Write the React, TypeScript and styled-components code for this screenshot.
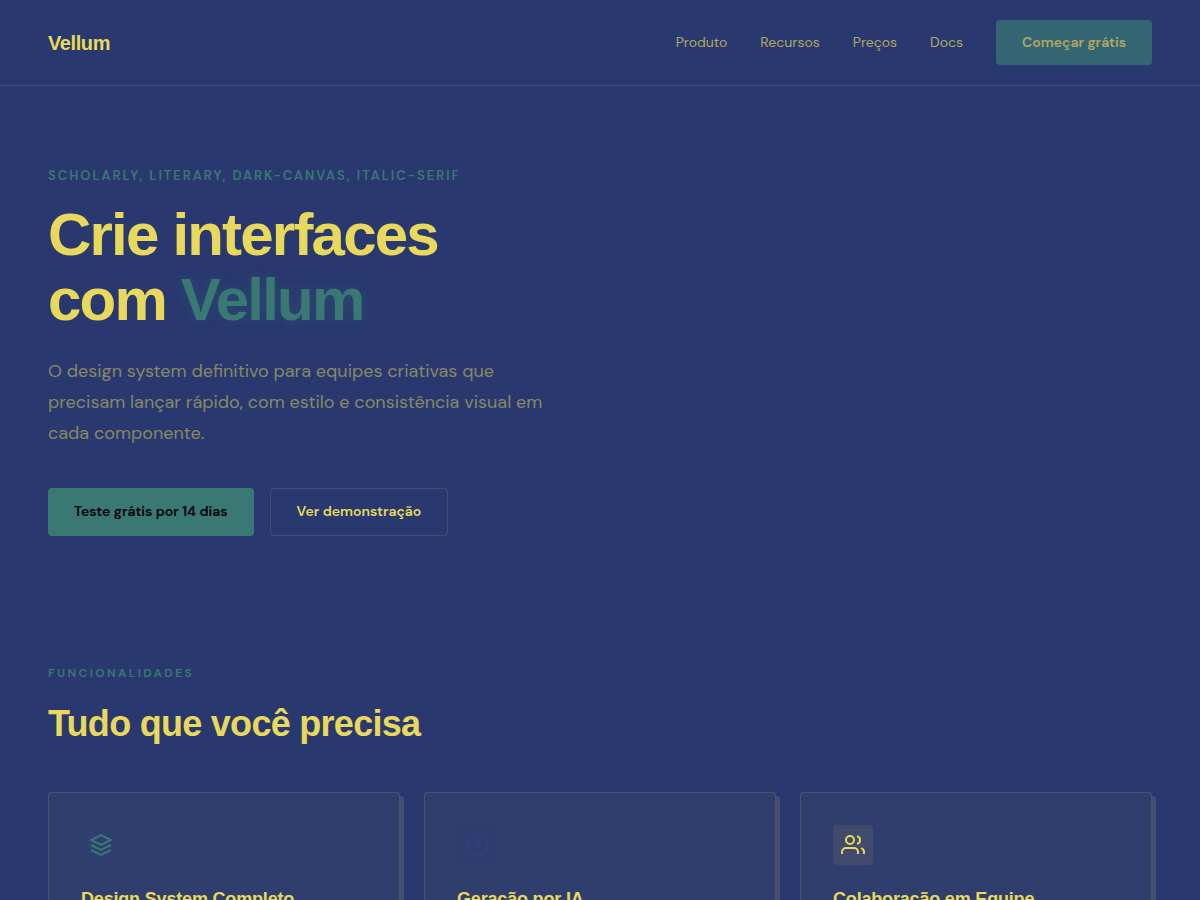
import React from "react";
import styled, { createGlobalStyle } from "styled-components";

const sans = `"DM Sans", "Open Sans", sans-serif`;
const display = `"Liberation Sans", Arial, sans-serif`;
const yellow = "#e8d85c";
const teal = "#3a7874";
const line = "rgba(232, 216, 92, 0.15)";

const GlobalStyle = createGlobalStyle`
  *, *::before, *::after { box-sizing: border-box; }
  html, body { margin: 0; padding: 0; }
  body {
    background: #29386f;
    color: ${yellow};
    font-family: ${sans};
    line-height: 1.6;
  }
`;

const Header = styled.header`
  display: flex;
  align-items: center;
  justify-content: space-between;
  padding: 20px 48px;
  border-bottom: 1px solid ${line};
`;

const Logo = styled.a`
  color: ${yellow};
  font: 700 20px/32px ${display};
  letter-spacing: -0.02em;
  text-decoration: none;
`;

const Nav = styled.nav`
  display: flex;
  align-items: center;
  gap: 33px;
`;

const NavLink = styled.a`
  color: ${yellow};
  opacity: 0.7;
  font-size: 14px;
  line-height: 25px;
  text-decoration: none;
`;

const NavButton = styled(NavLink)`
  padding: 10px 26px;
  border-radius: 4px;
  background: ${teal};
  font-weight: 600;
`;

const Hero = styled.section`
  padding: 80px 48px;
`;

const Eyebrow = styled.p<{ $small?: boolean }>`
  margin: 0 0 ${(p) => (p.$small ? 12 : 16)}px;
  color: ${teal};
  font-size: ${(p) => (p.$small ? 12 : 13)}px;
  font-weight: 600;
  line-height: ${(p) => (p.$small ? 18 : 20)}px;
  letter-spacing: ${(p) => (p.$small ? 0.2 : 0.15)}em;
  text-transform: uppercase;
`;

const HeroTitle = styled.h1`
  max-width: 640px;
  margin: 0 0 24px;
  font: 700 60px/65px ${display};
  letter-spacing: -0.03em;
`;

const Accent = styled.span`
  color: ${teal};
  text-shadow: 0 0 12px rgba(58, 120, 116, 0.3);
`;

const Lead = styled.p`
  max-width: 520px;
  margin: 0 0 39px;
  color: rgba(232, 216, 92, 0.5);
  font-size: 18px;
  line-height: 31px;
`;

const Actions = styled.div`
  display: flex;
  flex-wrap: wrap;
  gap: 16px;
`;

const Button = styled.button<{ $outline?: boolean }>`
  height: 48px;
  padding: 0 26px 2px;
  border: ${(p) => (p.$outline ? `1px solid ${line}` : "0")};
  border-radius: 4px;
  background: ${(p) => (p.$outline ? "transparent" : teal)};
  color: ${(p) => (p.$outline ? yellow : "#000")};
  font: 600 14px/25px ${sans};
  cursor: pointer;
`;

const Features = styled.section`
  padding: 48px 48px 80px;
`;

const SectionTitle = styled.h2`
  margin: 0 0 38px;
  font: 700 36px/60px ${display};
  letter-spacing: -0.02em;
`;

const Grid = styled.div`
  display: grid;
  grid-template-columns: repeat(3, 1fr);
  gap: 24px;
`;

const Card = styled.article`
  padding: 32px;
  border: 1px solid ${line};
  border-radius: 4px;
  background: #303e6e;
  box-shadow: 4px 4px 0 #454e6c;
`;

const IconBox = styled.div<{ $color: string; $tint: string }>`
  display: grid;
  place-items: center;
  width: 40px;
  height: 40px;
  margin-bottom: 20px;
  border-radius: 4px;
  background: ${(p) => p.$tint};
  color: ${(p) => p.$color};
`;

const CardTitle = styled.h3`
  margin: 0 0 8px;
  font: 700 18px/28px ${display};
  letter-spacing: -0.01em;
`;

const CardText = styled.p`
  margin: 0;
  opacity: 0.5;
  font-size: 14px;
  line-height: 25px;
`;

const Icon = ({ children }: { children: React.ReactNode }) => (
  <svg
    width="24"
    height="24"
    viewBox="0 0 24 24"
    fill="none"
    stroke="currentColor"
    strokeWidth="2"
    aria-hidden="true"
  >
    {children}
  </svg>
);

const features = [
  {
    title: "Design System Completo",
    text: "Tokens, componentes e padrões prontos para usar.",
    color: teal,
    tint: "#2f3f70",
    icon: (
      <>
        <path d="M12 2L2 7l10 5 10-5-10-5z" />
        <path d="M2 17l10 5 10-5" />
        <path d="M2 12l10 5 10-5" />
      </>
    ),
  },
  {
    title: "Geração por IA",
    text: "Crie telas consistentes a partir de uma descrição.",
    color: "#333d80",
    tint: "#2f3c6f",
    icon: (
      <>
        <circle cx="12" cy="12" r="10" />
        <path d="M12 6v6l4 2" />
      </>
    ),
  },
  {
    title: "Colaboração em Equipe",
    text: "Trabalhe em conjunto com toda a equipe.",
    color: yellow,
    tint: "#414a6c",
    icon: (
      <>
        <path d="M17 21v-2a4 4 0 0 0-4-4H5a4 4 0 0 0-4 4v2" />
        <circle cx="9" cy="7" r="4" />
        <path d="M23 21v-2a4 4 0 0 0-3-3.87" />
        <path d="M16 3.13a4 4 0 0 1 0 7.75" />
      </>
    ),
  },
];

export default function App() {
  return (
    <>
      <GlobalStyle />
      <Header>
        <Logo href="#">Vellum</Logo>
        <Nav>
          <NavLink href="#produto">Produto</NavLink>
          <NavLink href="#recursos">Recursos</NavLink>
          <NavLink href="#precos">Preços</NavLink>
          <NavLink href="#docs">Docs</NavLink>
          <NavButton href="#comecar">Começar grátis</NavButton>
        </Nav>
      </Header>
      <main>
        <Hero>
          <Eyebrow>scholarly, literary, dark-canvas, italic-serif</Eyebrow>
          <HeroTitle>
            Crie interfaces
            <br />
            com <Accent>Vellum</Accent>
          </HeroTitle>
          <Lead>
            O design system definitivo para equipes criativas que precisam lançar
            rápido, com estilo e consistência visual em cada componente.
          </Lead>
          <Actions>
            <Button type="button">Teste grátis por 14 dias</Button>
            <Button type="button" $outline>
              Ver demonstração
            </Button>
          </Actions>
        </Hero>
        <Features id="recursos">
          <Eyebrow $small>Funcionalidades</Eyebrow>
          <SectionTitle>Tudo que você precisa</SectionTitle>
          <Grid>
            {features.map((f) => (
              <Card key={f.title}>
                <IconBox $color={f.color} $tint={f.tint}>
                  <Icon>{f.icon}</Icon>
                </IconBox>
                <CardTitle>{f.title}</CardTitle>
                <CardText>{f.text}</CardText>
              </Card>
            ))}
          </Grid>
        </Features>
      </main>
    </>
  );
}
